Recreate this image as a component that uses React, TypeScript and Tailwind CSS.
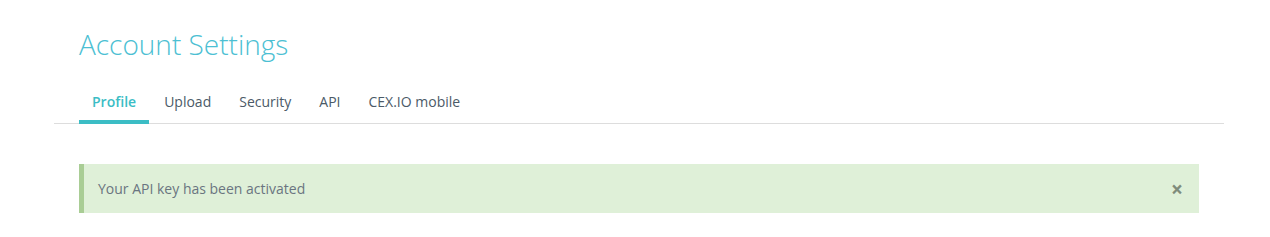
export default function App() {
  const tabs = ["Profile", "Upload", "Security", "API", "CEX.IO mobile"];
  const active = "Profile";

  return (
    <main
      className="bg-white"
      style={{ fontFamily: '"Open Sans", "Liberation Sans", sans-serif' }}
    >
      <div className="ml-[54px] w-[1170px]">
        <h1 className="ml-[25px] mt-[29px] text-[28px] font-light leading-[31px] text-[#4cbfd3]">
          Account Settings
        </h1>

        <nav className="mt-[20px] flex gap-[2px] border-b border-[#dddddd] pl-[25px]">
          {tabs.map((tab) => (
            <a
              key={tab}
              className={
                tab === active
                  ? "-mb-px border-b-4 border-[#3bbdc5] px-[13px] pt-[12px] pb-[8px] text-sm font-semibold leading-5 text-[#3bbdc5]"
                  : "-mb-px border-b-4 border-transparent px-[13px] pt-[12px] pb-[8px] text-sm leading-5 text-[#4b5a67]"
              }
            >
              {tab}
            </a>
          ))}
        </nav>

        <div className="mx-[25px] mt-[40px] flex items-center justify-between border-l-[5px] border-[#a9cd95] bg-[#dff0d8] pt-[15px] pb-[14px] pl-[14px] pr-[16px]">
          <p className="text-sm leading-5 text-[#6a7580]">
            Your API key has been activated
          </p>
          <button className="text-[21px] font-bold leading-5 text-[#7f8c7c]">
            ×
          </button>
        </div>
      </div>
    </main>
  );
}
